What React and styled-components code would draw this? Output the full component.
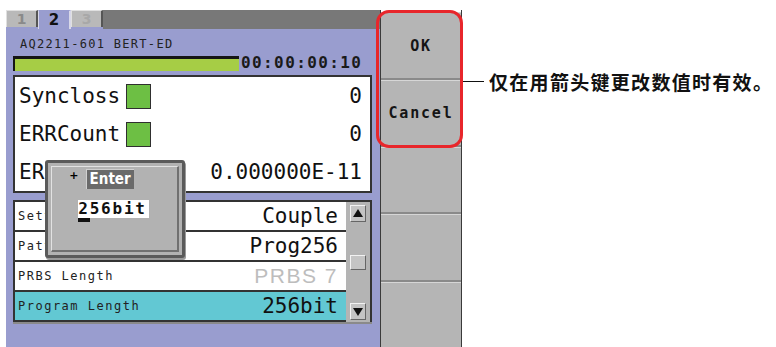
import React from "react";
import styled, { createGlobalStyle } from "styled-components";

const GlobalStyle = createGlobalStyle`
  html, body { margin: 0; padding: 0; background: #fff; }
  body { width: 776px; height: 347px; overflow: hidden; font-family: "DejaVu Sans Mono", "Liberation Mono", monospace; }
`;

const Page = styled.div`
  display: flex;
  align-items: flex-start;
  width: 776px;
  height: 347px;
  padding: 10px 0 0 6px;
  box-sizing: border-box;
  overflow: hidden;
`;

const Device = styled.div`
  position: relative;
  display: flex;
  height: 345px;
`;

const Screen = styled.div`
  position: relative;
  width: 374px;
  background: #999dcf;
  border-right: 1px solid #3a3a3a;
  display: flex;
  flex-direction: column;
`;

const TabBar = styled.div`
  display: flex;
  height: 19px;
  background: #787878;
`;

const Tabs = styled.div`
  display: flex;
  background: #999dcf;
`;

const Tab = styled.div`
  width: ${p => (p.$active ? 33 : 32)}px;
  height: ${p => (p.$active ? 19 : 17)}px;
  box-sizing: border-box;
  background: ${p => (p.$active ? "#999dcf" : "#b9b9b9")};
  border-top: 1px solid ${p => (p.$active ? "#999dcf" : "#e0e0e0")};
  border-left: 1px solid ${p => (p.$active ? "#d8d8e8" : "#e0e0e0")};
  border-right: 2px solid ${p => (p.$active ? "#d8d8e8" : "#555")};
  display: flex;
  align-items: center;
  justify-content: center;
  font-family: "DejaVu Sans", sans-serif;
  font-weight: bold;
  font-size: ${p => (p.$active ? 15 : 14)}px;
  color: ${p => (p.$active ? "#111" : p.$dim ? "#a8a8a8" : "#8a8a8a")};
`;

const Header = styled.div`
  padding: 8px 0 0 14px;
  height: 14px;
  line-height: 14px;
  font-size: 12px;
  letter-spacing: 1.3px;
  color: #222;
`;

const ProgressRow = styled.div`
  display: flex;
  align-items: flex-end;
  margin: 4px 0 0 7px;
  height: 16px;
`;

const ProgressBar = styled.div`
  width: 224px;
  height: 12px;
  background: #a6cd45;
  border-top: 3px solid #151515;
  border-left: 2px solid #151515;
`;

const Time = styled.div`
  margin-left: 2px;
  font-size: 16px;
  font-weight: bold;
  letter-spacing: 1.4px;
  line-height: 16px;
  color: #1a1a1a;
`;

const MainPanel = styled.div`
  margin: 4px 8px 0 7px;
  background: #fff;
  border: 2px solid #333;
  display: flex;
  flex-direction: column;
`;

const StatRow = styled.div`
  height: 38px;
  display: flex;
  align-items: center;
  padding: 0 8px 0 4px;
  font-size: 21px;
  color: #111;
`;

const Lamp = styled.span`
  width: 23px;
  height: 23px;
  margin-left: 6px;
  background: #6dbf44;
  border: 1px solid #2f2f2f;
`;

const StatValue = styled.span`
  margin-left: auto;
`;

const ListPanel = styled.div`
  display: flex;
  margin: 7px 8px 0 7px;
  border: 2px solid #333;
  border-bottom: none;
  background: #b4b4b4;
  box-shadow: 0 2px 0 #8a8a8a;
`;

const Rows = styled.div`
  flex: 1;
  display: flex;
  flex-direction: column;
`;

const Row = styled.div`
  height: 28px;
  display: flex;
  align-items: center;
  justify-content: space-between;
  padding: 0 8px 0 3px;
  background: ${p => (p.$selected ? "#62c8d3" : "#fff")};
  border-bottom: 2px solid #333;
`;

const RowLabel = styled.span`
  font-size: 12px;
  letter-spacing: 1.5px;
  color: #222;
`;

const RowValue = styled.span`
  font-size: 21px;
  color: ${p => (p.$dim ? "#bdbdbd" : "#111")};
  font-family: ${p => (p.$dim ? '"Liberation Sans", sans-serif' : '"DejaVu Sans Mono", monospace')};
  letter-spacing: ${p => (p.$dim ? "1.5px" : "0")};
`;

const Scrollbar = styled.div`
  width: 24px;
  display: flex;
  flex-direction: column;
  align-items: center;
  justify-content: space-between;
  padding: 3px 0 2px;
`;

const ScrollButton = styled.div`
  width: 16px;
  height: 17px;
  box-sizing: border-box;
  background: #c4c4c4;
  border-top: 1px solid #f2f2f2;
  border-left: 1px solid #f2f2f2;
  border-right: 1px solid #666;
  border-bottom: 1px solid #666;
  display: flex;
  align-items: center;
  justify-content: center;
`;

const Thumb = styled(ScrollButton)`
  height: 15px;
`;

const Popup = styled.div`
  position: absolute;
  left: 39px;
  top: 150px;
  width: 140px;
  height: 98px;
  box-sizing: border-box;
  background: #b2b2b2;
  border: 3px solid #5a5a5a;
  border-radius: 3px;
  box-shadow: 1px 2px 0 #9a9a9a;
  padding: 3px;
  display: flex;
`;

const PopupInner = styled.div`
  flex: 1;
  border-top: 1px solid #e2e2e2;
  border-left: 1px solid #e2e2e2;
  border-right: 2px solid #707070;
  border-bottom: 2px solid #707070;
  display: flex;
  flex-direction: column;
  align-items: center;
  padding-top: 2px;
`;

const EnterLine = styled.div`
  display: flex;
  align-items: flex-start;
  margin-left: -26px;
`;

const Plus = styled.span`
  font-family: "DejaVu Sans", sans-serif;
  font-weight: bold;
  font-size: 11px;
  line-height: 10px;
  margin-right: 7px;
  margin-top: 2px;
`;

const EnterTag = styled.span`
  background: #6a6a6a;
  color: #fff;
  font-family: "DejaVu Sans Condensed", "DejaVu Sans", sans-serif;
  font-weight: bold;
  font-size: 15px;
  line-height: 19px;
  padding: 0 3px;
  border-top: 1px solid #d0d0d0;
  border-left: 1px solid #d0d0d0;
`;

const EditValue = styled.div`
  margin-top: 11px;
  margin-left: -2px;
  background: #fff;
  font-size: 16px;
  font-weight: bold;
  letter-spacing: 1.8px;
  line-height: 18px;
  padding-right: 2px;
  color: #111;
`;

const Cursor = styled.span`
  border-bottom: 4px solid #111;
`;

const ButtonColumn = styled.div`
  width: 80px;
  display: flex;
  flex-direction: column;
  border-right: 1px solid #3a3a3a;
  padding-top: 2px;
`;

const SoftKey = styled.div`
  height: ${p => p.$h}px;
  box-sizing: border-box;
  background: #b5b5b5;
  border-top: 1px solid #d6d6d6;
  border-bottom: 2px solid #8a8a8a;
  display: flex;
  align-items: center;
  justify-content: center;
  font-size: 15px;
  font-weight: bold;
  letter-spacing: 1.8px;
  color: #151515;
`;

const Highlight = styled.div`
  position: absolute;
  left: 370px;
  top: 0;
  width: 87px;
  height: 138px;
  box-sizing: border-box;
  border: 3px solid #e8262b;
  border-radius: 13px;
`;

const Callout = styled.div`
  display: flex;
  align-items: center;
  margin-top: 58px;
`;

const Leader = styled.div`
  width: 22px;
  height: 1px;
  background: #111;
  margin-right: 5px;
`;

const Note = styled.div`
  font-family: "Noto Sans CJK SC", sans-serif;
  font-weight: bold;
  font-size: 19px;
  letter-spacing: 1.3px;
  color: #111;
  white-space: nowrap;
`;

const Arrow = ({ down }) => (
  <svg width="10" height="9" viewBox="0 0 10 9">
    <polygon points={down ? "0,1 10,1 5,9" : "0,8 10,8 5,0"} fill="#111" />
  </svg>
);

export default function App() {
  return (
    <>
      <GlobalStyle />
      <Page>
        <Device>
          <Screen>
            <TabBar>
              <Tabs>
                <Tab>1</Tab>
                <Tab $active>2</Tab>
                <Tab $dim>3</Tab>
              </Tabs>
            </TabBar>
            <Header>AQ2211-601 BERT-ED</Header>
            <ProgressRow>
              <ProgressBar />
              <Time>00:00:00:10</Time>
            </ProgressRow>
            <MainPanel>
              <StatRow>
                <span>Syncloss</span>
                <Lamp />
                <StatValue>0</StatValue>
              </StatRow>
              <StatRow>
                <span>ERRCount</span>
                <Lamp />
                <StatValue>0</StatValue>
              </StatRow>
              <StatRow>
                <span>ERR</span>
                <StatValue>0.000000E-11</StatValue>
              </StatRow>
            </MainPanel>
            <ListPanel>
              <Rows>
                <Row>
                  <RowLabel>Setting</RowLabel>
                  <RowValue>Couple</RowValue>
                </Row>
                <Row>
                  <RowLabel>Pattern</RowLabel>
                  <RowValue>Prog256</RowValue>
                </Row>
                <Row>
                  <RowLabel>PRBS Length</RowLabel>
                  <RowValue $dim>PRBS 7</RowValue>
                </Row>
                <Row $selected>
                  <RowLabel>Program Length</RowLabel>
                  <RowValue>256bit</RowValue>
                </Row>
              </Rows>
              <Scrollbar>
                <ScrollButton><Arrow /></ScrollButton>
                <Thumb />
                <ScrollButton><Arrow down /></ScrollButton>
              </Scrollbar>
            </ListPanel>
            <Popup>
              <PopupInner>
                <EnterLine>
                  <Plus>+</Plus>
                  <EnterTag>Enter</EnterTag>
                </EnterLine>
                <EditValue>
                  <Cursor>2</Cursor>56bit
                </EditValue>
              </PopupInner>
            </Popup>
          </Screen>
          <ButtonColumn>
            <SoftKey $h={68}>OK</SoftKey>
            <SoftKey $h={67}>Cancel</SoftKey>
            <SoftKey $h={67} />
            <SoftKey $h={68} />
            <SoftKey $h={70} />
          </ButtonColumn>
          <Highlight />
        </Device>
        <Callout>
          <Leader />
          <Note>仅在用箭头键更改数值时有效。</Note>
        </Callout>
      </Page>
    </>
  );
}
